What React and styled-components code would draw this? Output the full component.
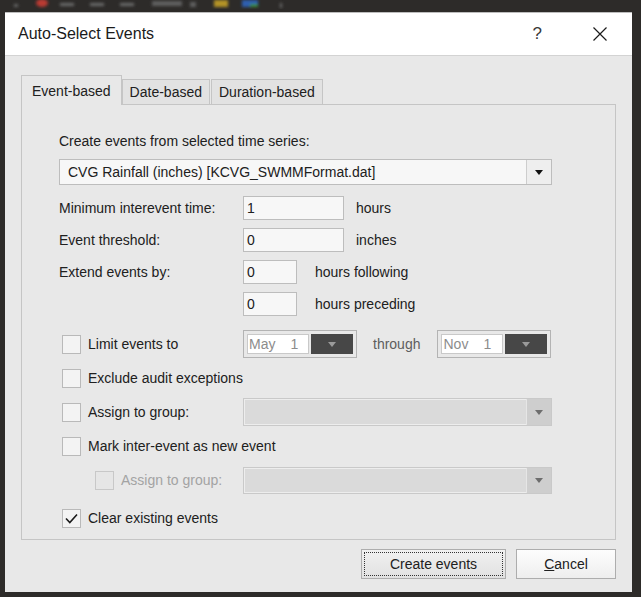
import React from 'react'
import styled, { createGlobalStyle } from 'styled-components'

const GlobalStyle = createGlobalStyle`
  html, body {
    margin: 0;
    background: #2d2b29;
  }
  body {
    font-family: "Liberation Sans", Arial, sans-serif;
    font-size: 14px;
    color: #202020;
  }
  * {
    box-sizing: border-box;
  }
`

const colors = {
  face: '#e8e8e8',
  line: '#c5c5c5',
  field: '#f7f7f7',
  text: '#202020',
  muted: '#a3a3a3',
}

const Screen = styled.div`
  width: 641px;
  height: 597px;
  display: flex;
  flex-direction: column;
  padding: 0 9px 5px 5px;
  overflow: hidden;
`

const Strip = styled.svg`
  display: block;
  flex: none;
  margin-left: -5px;
`

const Dialog = styled.div`
  flex: 1;
  display: flex;
  flex-direction: column;
`

const TitleBar = styled.div`
  height: 44px;
  flex: none;
  background: #fff;
  border-top: 1px solid #bdbdbd;
  border-bottom: 1px solid #d3d3d3;
  display: flex;
  align-items: center;
  padding: 0 25px 0 13px;
`

const Title = styled.div`
  flex: 1;
  font-size: 16px;
  color: #1b1b1b;
`

const HelpMark = styled.span`
  font-size: 17px;
  color: #3a3a3a;
  margin-right: 51px;
`

const Body = styled.div`
  flex: 1;
  background: ${colors.face};
  padding: 19px 16px 0;
  display: flex;
  flex-direction: column;
`

const TabRow = styled.div`
  height: 29px;
  display: flex;
  align-items: flex-end;
`

const Tab = styled.div`
  height: ${({ $active }) => ($active ? 30 : 25)}px;
  margin-bottom: ${({ $active }) => ($active ? -1 : 0)}px;
  margin-right: ${({ $active }) => ($active ? 0 : 1)}px;
  padding: 0 ${({ $active }) => ($active ? 10 : 7)}px;
  border: 1px solid ${colors.line};
  border-bottom: none;
  background: ${({ $active }) => ($active ? colors.face : '#e2e2e2')};
  position: relative;
  z-index: ${({ $active }) => ($active ? 1 : 0)};
  display: flex;
  align-items: center;
  white-space: nowrap;
`

const Panel = styled.div`
  height: 436px;
  border: 1px solid ${colors.line};
  background: ${colors.face};
  padding: 27px 0 0 37px;
  display: flex;
  flex-direction: column;
`

const Heading = styled.div`
  height: 18px;
  line-height: 18px;
`

const Combo = styled.div`
  width: 309px;
  height: ${({ $h }) => $h || 28}px;
  display: flex;
  border: 1px solid ${({ $disabled }) => ($disabled ? '#c9c9c9' : '#bdbdbd')};
  background: ${({ $disabled }) => ($disabled ? '#dadada' : colors.field)};
  box-shadow: ${({ $disabled }) => ($disabled ? 'inset 0 0 0 1px #ededed' : 'none')};
`

const MainCombo = styled(Combo)`
  width: 493px;
  height: 26px;
  margin-top: 9px;
`

const ComboText = styled.div`
  flex: 1;
  display: flex;
  align-items: center;
  padding-left: 8px;
  white-space: nowrap;
`

const ComboButton = styled.div`
  width: 25px;
  display: flex;
  align-items: center;
  justify-content: center;
  border-left: 1px solid ${({ $disabled }) => ($disabled ? '#e6e6e6' : '#cdcdcd')};
  background: ${({ $disabled }) => ($disabled ? '#cecece' : '#eeeeee')};
`

const Arrow = styled.span`
  width: 0;
  height: 0;
  border-left: 4.5px solid transparent;
  border-right: 4.5px solid transparent;
  border-top: 5px solid ${({ $color }) => $color || '#111'};
`

const Fields = styled.div`
  margin-top: 11px;
  display: flex;
  flex-direction: column;
  gap: 8px;
`

const FieldRow = styled.div`
  height: 24px;
  display: flex;
  align-items: center;
`

const FieldLabel = styled.div`
  width: 184px;
`

const TextBox = styled.div`
  width: ${({ $w }) => $w}px;
  height: 24px;
  border: 1px solid #bdbdbd;
  background: ${colors.field};
  padding-left: 3px;
  display: flex;
  align-items: center;
`

const Unit = styled.span`
  margin-left: ${({ $gap }) => $gap}px;
`

const Checks = styled.div`
  margin-top: 11px;
  display: flex;
  flex-direction: column;
`

const CheckRow = styled.div`
  height: 34px;
  margin-top: ${({ $space }) => $space || 0}px;
  display: flex;
  align-items: center;
`

const CheckCell = styled.label`
  width: 184px;
  padding-left: ${({ $indent }) => $indent || 3}px;
  display: flex;
  align-items: center;
  gap: 7px;
  color: ${({ $disabled }) => ($disabled ? colors.muted : colors.text)};
  white-space: nowrap;
`

const Box = styled.span`
  width: 19px;
  height: 19px;
  flex: none;
  border: 1px solid ${({ $disabled }) => ($disabled ? '#c8c8c8' : '#b9b9b9')};
  background: ${({ $disabled }) => ($disabled ? '#e6e6e6' : '#f3f3f3')};
  display: flex;
  align-items: center;
  justify-content: center;
`

const DatePicker = styled.div`
  width: 114px;
  height: 28px;
  border: 1px solid #b3b3b3;
  padding: 3px;
  display: flex;
  gap: 2px;
`

const DateField = styled.div`
  width: 62px;
  background: #fff;
  border: 1px solid #c9c9c9;
  color: #8c8c8c;
  display: flex;
  align-items: center;
  padding-left: 1px;
  gap: 15px;
`

const DateButton = styled.div`
  flex: 1;
  background: #474747;
  display: flex;
  align-items: center;
  justify-content: center;
`

const Through = styled.span`
  color: #5d5d5d;
  margin: 0 17px 0 16px;
`

const Buttons = styled.div`
  margin-top: 9px;
  display: flex;
  justify-content: flex-end;
  gap: 10px;
`

const Button = styled.button`
  width: ${({ $w }) => $w}px;
  height: 30px;
  border: 1px solid #adadad;
  background: ${({ $focus }) =>
    $focus ? 'linear-gradient(#f1f1f1, #e1e1e1)' : 'linear-gradient(#fdfdfd, #eeeeee)'};
  outline: ${({ $focus }) => ($focus ? '1px dotted #333' : 'none')};
  outline-offset: -4px;
  font-family: inherit;
  font-size: 14px;
  color: ${colors.text};
  padding: 0;
`

const Key = styled.span`
  text-decoration: underline;
`

const CloseIcon = () => (
  <svg width="14" height="14" viewBox="0 0 14 14">
    <path d="M0.5 0.5 L13.5 13.5 M13.5 0.5 L0.5 13.5" stroke="#1b1b1b" strokeWidth="1.2" />
  </svg>
)

const Tick = () => (
  <svg width="13" height="11" viewBox="0 0 13 11">
    <path d="M1 5.5 L4.8 9.5 L12 1.5" fill="none" stroke="#1a1a1a" strokeWidth="1.6" />
  </svg>
)

const TopStrip = () => (
  <Strip width="641" height="12" viewBox="0 0 641 12">
    <defs>
      <filter id="soft">
        <feGaussianBlur stdDeviation="1.4" />
      </filter>
    </defs>
    <g filter="url(#soft)">
      <rect x="14" y="4" width="4" height="3" fill="#666" />
      <ellipse cx="42" cy="3" rx="6" ry="4" fill="#b93a33" />
      <rect x="60" y="3" width="14" height="3" fill="#6b6b6b" />
      <rect x="90" y="3" width="14" height="3" fill="#6b6b6b" />
      <rect x="120" y="3" width="14" height="3" fill="#6b6b6b" />
      <rect x="152" y="1" width="30" height="5" fill="#5e5e5e" />
      <rect x="190" y="2" width="6" height="5" fill="#5e5e5e" />
      <rect x="214" y="0" width="14" height="7" fill="#b39327" />
      <rect x="242" y="0" width="16" height="7" fill="#2f5fb0" />
      <rect x="250" y="4" width="8" height="3" fill="#3b8c3b" />
      <rect x="280" y="3" width="2" height="5" fill="#6b6b6b" />
    </g>
  </Strip>
)

const App = () => (
  <>
    <GlobalStyle />
    <Screen>
      <TopStrip />
      <Dialog>
        <TitleBar>
          <Title>Auto-Select Events</Title>
          <HelpMark>?</HelpMark>
          <CloseIcon />
        </TitleBar>
        <Body>
          <TabRow>
            <Tab $active>Event-based</Tab>
            <Tab>Date-based</Tab>
            <Tab>Duration-based</Tab>
          </TabRow>
          <Panel>
            <Heading>Create events from selected time series:</Heading>
            <MainCombo>
              <ComboText>CVG Rainfall (inches) [KCVG_SWMMFormat.dat]</ComboText>
              <ComboButton>
                <Arrow />
              </ComboButton>
            </MainCombo>

            <Fields>
              <FieldRow>
                <FieldLabel>Minimum interevent time:</FieldLabel>
                <TextBox $w={101}>1</TextBox>
                <Unit $gap={12}>hours</Unit>
              </FieldRow>
              <FieldRow>
                <FieldLabel>Event threshold:</FieldLabel>
                <TextBox $w={101}>0</TextBox>
                <Unit $gap={12}>inches</Unit>
              </FieldRow>
              <FieldRow>
                <FieldLabel>Extend events by:</FieldLabel>
                <TextBox $w={54}>0</TextBox>
                <Unit $gap={18}>hours following</Unit>
              </FieldRow>
              <FieldRow>
                <FieldLabel />
                <TextBox $w={54}>0</TextBox>
                <Unit $gap={18}>hours preceding</Unit>
              </FieldRow>
            </Fields>

            <Checks>
              <CheckRow>
                <CheckCell>
                  <Box />
                  Limit events to
                </CheckCell>
                <DatePicker>
                  <DateField>
                    <span>May</span>
                    <span>1</span>
                  </DateField>
                  <DateButton>
                    <Arrow $color="#9a9a9a" />
                  </DateButton>
                </DatePicker>
                <Through>through</Through>
                <DatePicker>
                  <DateField>
                    <span>Nov</span>
                    <span>1</span>
                  </DateField>
                  <DateButton>
                    <Arrow $color="#9a9a9a" />
                  </DateButton>
                </DatePicker>
              </CheckRow>
              <CheckRow>
                <CheckCell>
                  <Box />
                  Exclude audit exceptions
                </CheckCell>
              </CheckRow>
              <CheckRow>
                <CheckCell>
                  <Box />
                  Assign to group:
                </CheckCell>
                <Combo $disabled>
                  <ComboText />
                  <ComboButton $disabled>
                    <Arrow $color="#6d6d6d" />
                  </ComboButton>
                </Combo>
              </CheckRow>
              <CheckRow>
                <CheckCell>
                  <Box />
                  Mark inter-event as new event
                </CheckCell>
              </CheckRow>
              <CheckRow>
                <CheckCell $indent={36} $disabled>
                  <Box $disabled />
                  Assign to group:
                </CheckCell>
                <Combo $disabled $h={27}>
                  <ComboText />
                  <ComboButton $disabled>
                    <Arrow $color="#6d6d6d" />
                  </ComboButton>
                </Combo>
              </CheckRow>
              <CheckRow $space={4}>
                <CheckCell>
                  <Box>
                    <Tick />
                  </Box>
                  Clear existing events
                </CheckCell>
              </CheckRow>
            </Checks>
          </Panel>
          <Buttons>
            <Button $w={145} $focus>
              Create events
            </Button>
            <Button $w={100}>
              <Key>C</Key>ancel
            </Button>
          </Buttons>
        </Body>
      </Dialog>
    </Screen>
  </>
)

export default App
